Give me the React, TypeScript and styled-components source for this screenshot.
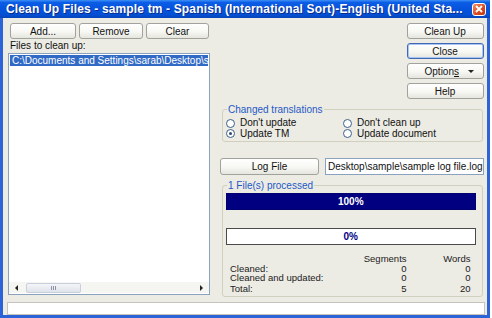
import React from "react";
import styled, { createGlobalStyle } from "styled-components";

const Global = createGlobalStyle`
  html, body { margin: 0; padding: 0; background: #ffffff; }
  body { font-family: "Liberation Sans", Arial, sans-serif; font-size: 10px; color: #111; }
  * { box-sizing: border-box; }
`;

const Window = styled.div`
  width: 490px;
  height: 318px;
  display: flex;
  flex-direction: column;
  background: #ecebe4;
`;

const TitleBar = styled.div`
  height: 18px;
  flex: none;
  display: flex;
  align-items: center;
  padding: 0 4px 0 6px;
  background: linear-gradient(to bottom, #3d8ff6 0%, #0b5de6 14%, #0654de 45%, #0451d6 80%, #0645ba 100%);
`;

const Title = styled.div`
  flex: 1;
  color: #fff;
  font-weight: bold;
  font-size: 12px;
  letter-spacing: 0.15px;
  white-space: nowrap;
  overflow: hidden;
  text-shadow: 1px 1px 0 #0a2a8c;
`;

const CloseButton = styled.div`
  width: 14px;
  height: 13px;
  flex: none;
  border: 1px solid #ffffff;
  border-radius: 3px;
  background: linear-gradient(135deg, #f0906a, #d9481f 60%, #c23a14);
  display: flex;
  align-items: center;
  justify-content: center;
`;

const Frame = styled.div`
  flex: 1;
  display: flex;
  flex-direction: column;
  border: 3px solid #2d63d8;
  border-top: none;
  min-height: 0;
`;

const Body = styled.div`
  flex: 1;
  display: flex;
  gap: 10px;
  padding: 5px 7px 0 5px;
  min-height: 0;
`;

const LeftCol = styled.div`
  width: 202px;
  display: flex;
  flex-direction: column;
  padding-bottom: 2px;
`;

const RightCol = styled.div`
  flex: 1;
  display: flex;
  flex-direction: column;
`;

const ButtonRow = styled.div`
  display: flex;
  gap: 3px;
  padding-left: 2px;
`;

const Button = styled.div<{ $w?: number; $focus?: boolean }>`
  width: ${(p) => (p.$w ? `${p.$w}px` : "auto")};
  height: 16px;
  display: flex;
  align-items: center;
  justify-content: center;
  border: 1px solid ${(p) => (p.$focus ? "#3f68b8" : "#a2a29c")};
  border-radius: 3px;
  background: linear-gradient(to bottom, #ffffff 0%, #f7f7f3 55%, #e6e6df 100%);
  box-shadow: ${(p) => (p.$focus ? "inset 0 0 0 1px #a9c6f2" : "none")};
  color: #111;
  font-size: 10px;
  white-space: nowrap;
`;

const OptionsButton = styled(Button)`
  justify-content: flex-start;
  padding-left: 17px;
`;

const Arrow = styled.svg`
  margin-left: 9px;
`;

const FieldLabel = styled.div`
  line-height: 10px;
  margin: 2px 0 2px 2px;
`;

const ListBox = styled.div`
  flex: 1;
  display: flex;
  flex-direction: column;
  background: #fff;
  border: 1px solid #8aa2be;
`;

const ListItems = styled.div`
  flex: 1;
  padding: 1px;
`;

const SelectedItem = styled.div`
  background: #316ac5;
  color: #fff;
  height: 11px;
  line-height: 11px;
  padding-left: 2px;
  white-space: nowrap;
  overflow: hidden;
`;

const HScroll = styled.div`
  height: 11px;
  display: flex;
  align-items: center;
  background: #f5f5f1;
  margin: 0 0 1px 0;
`;

const ScrollArrow = styled.div`
  width: 15px;
  height: 11px;
  display: flex;
  align-items: center;
  justify-content: center;
`;

const Thumb = styled.div`
  width: 55px;
  height: 10px;
  margin-left: 2px;
  border: 1px solid #c9cfdc;
  border-radius: 2px;
  background: linear-gradient(to bottom, #f4f5f8, #dfe3ea);
  display: flex;
  align-items: center;
  justify-content: center;
  gap: 1px;
`;

const Grip = styled.span`
  width: 1px;
  height: 4px;
  background: #8d96a8;
`;

const Track = styled.div`
  flex: 1;
`;

const RightButtons = styled.div`
  display: flex;
  flex-direction: column;
  align-items: flex-end;
  gap: 4px;
`;

const Group = styled.fieldset<{ $grow?: boolean }>`
  margin: 5px 1px 0 2px;
  padding: 0 3px 2px 3px;
  border: 1px solid #d0d0bf;
  border-radius: 3px;
  min-inline-size: 0;
  flex: ${(p) => (p.$grow ? 1 : "none")};
  display: flex;
  flex-direction: column;
`;

const Legend = styled.legend`
  color: #2459c4;
  line-height: 11px;
  padding: 0 1px;
  margin-left: 1px;
`;

const RadioGrid = styled.div`
  display: grid;
  grid-template-columns: 117px 1fr;
  padding-top: 3px;
`;

const RadioItem = styled.div`
  display: flex;
  align-items: center;
  height: 10.5px;
  line-height: 10.5px;
`;

const RadioCircle = styled.span<{ $checked?: boolean }>`
  width: 9px;
  height: 9px;
  border-radius: 50%;
  border: 1px solid #3a5f8c;
  background: #fff;
  margin-right: 5px;
  display: flex;
  align-items: center;
  justify-content: center;
  &::after {
    content: "";
    display: ${(p) => (p.$checked ? "block" : "none")};
    width: 3px;
    height: 3px;
    border-radius: 50%;
    background: #2f4a6e;
  }
`;

const LogRow = styled.div`
  display: flex;
  margin-top: 16px;
  gap: 6px;
`;

const LogButton = styled(Button)`
  width: 99px;
  height: 17px;
`;

const TextBox = styled.div`
  flex: 1;
  height: 17px;
  border: 1px solid #8aa2be;
  background: #fff;
  line-height: 15px;
  padding-left: 2px;
  white-space: nowrap;
  overflow: hidden;
`;

const ProgressArea = styled.div`
  padding: 2px 3px 0 0;
  display: flex;
  flex-direction: column;
`;

const Progress = styled.div<{ $full?: boolean }>`
  height: 17px;
  display: flex;
  align-items: center;
  justify-content: center;
  font-weight: bold;
  font-size: 10px;
  background: ${(p) => (p.$full ? "#000080" : "#ffffff")};
  color: ${(p) => (p.$full ? "#ffffff" : "#000080")};
  border: 1px solid ${(p) => (p.$full ? "#000070" : "#4a4a4a")};
  & + & {
    margin-top: 18px;
  }
`;

const Stats = styled.div`
  display: grid;
  grid-template-columns: 1fr 60px 64px;
  margin: 9px 8px 0 4px;
  font-size: 9.5px;
  line-height: 9.5px;
  color: #222;
`;

const Num = styled.div<{ $gap?: boolean }>`
  text-align: right;
  margin-top: ${(p) => (p.$gap ? "1.5px" : "0")};
`;

const StatLabel = styled.div<{ $gap?: boolean }>`
  margin-top: ${(p) => (p.$gap ? "1.5px" : "0")};
`;

const StatusBar = styled.div`
  height: 13px;
  margin: 5px 2px 0 4px;
  background: #fff;
  border: 1px solid #c4c4bc;
  flex: none;
`;

const Tri = ({ dir }: { dir: "left" | "right" }) => {
  const pts = dir === "left" ? "4,0 4,6 1,3" : "1,0 1,6 4,3";
  return (
    <svg width={5} height={6} viewBox="0 0 5 6">
      <polygon points={pts} fill="#222" />
    </svg>
  );
};

export default function App() {
  return (
    <>
      <Global />
      <Window>
        <TitleBar>
          <Title>Clean Up Files - sample tm - Spanish (International Sort)-English (United Sta...</Title>
          <CloseButton>
            <svg width="8" height="8" viewBox="0 0 8 8">
              <path d="M1 1 L7 7 M7 1 L1 7" stroke="#fff" strokeWidth="1.8" />
            </svg>
          </CloseButton>
        </TitleBar>
        <Frame>
          <Body>
            <LeftCol>
              <ButtonRow>
                <Button $w={66}>Add...</Button>
                <Button $w={64}>Remove</Button>
                <Button $w={63}>Clear</Button>
              </ButtonRow>
              <FieldLabel>Files to clean up:</FieldLabel>
              <ListBox>
                <ListItems>
                  <SelectedItem>C:\Documents and Settings\sarab\Desktop\s</SelectedItem>
                </ListItems>
                <HScroll>
                  <ScrollArrow>
                    <Tri dir="left" />
                  </ScrollArrow>
                  <Thumb>
                    <Grip />
                    <Grip />
                    <Grip />
                  </Thumb>
                  <Track />
                  <ScrollArrow>
                    <Tri dir="right" />
                  </ScrollArrow>
                </HScroll>
              </ListBox>
            </LeftCol>
            <RightCol>
              <RightButtons>
                <Button $w={77}>Clean Up</Button>
                <Button $w={77} $focus>
                  Close
                </Button>
                <OptionsButton $w={77}>
                  <span>
                    Option<u>s</u>
                  </span>
                  <Arrow width="6" height="5" viewBox="0 0 6 5">
                    <polygon points="0,1 6,1 3,4" fill="#222" />
                  </Arrow>
                </OptionsButton>
                <Button $w={77}>Help</Button>
              </RightButtons>
              <Group>
                <Legend>Changed translations</Legend>
                <RadioGrid>
                  <RadioItem>
                    <RadioCircle />
                    Don't update
                  </RadioItem>
                  <RadioItem>
                    <RadioCircle />
                    Don't clean up
                  </RadioItem>
                  <RadioItem>
                    <RadioCircle $checked />
                    Update TM
                  </RadioItem>
                  <RadioItem>
                    <RadioCircle />
                    Update document
                  </RadioItem>
                </RadioGrid>
              </Group>
              <LogRow>
                <LogButton>Log File</LogButton>
                <TextBox>Desktop\sample\sample log file.log</TextBox>
              </LogRow>
              <Group $grow>
                <Legend>1 File(s) processed</Legend>
                <ProgressArea>
                  <Progress $full>100%</Progress>
                  <Progress>0%</Progress>
                </ProgressArea>
                <Stats>
                  <div />
                  <Num>Segments</Num>
                  <Num>Words</Num>
                  <StatLabel>Cleaned:</StatLabel>
                  <Num>0</Num>
                  <Num>0</Num>
                  <StatLabel>Cleaned and updated:</StatLabel>
                  <Num>0</Num>
                  <Num>0</Num>
                  <StatLabel $gap>Total:</StatLabel>
                  <Num $gap>5</Num>
                  <Num $gap>20</Num>
                </Stats>
              </Group>
            </RightCol>
          </Body>
          <StatusBar />
        </Frame>
      </Window>
    </>
  );
}
